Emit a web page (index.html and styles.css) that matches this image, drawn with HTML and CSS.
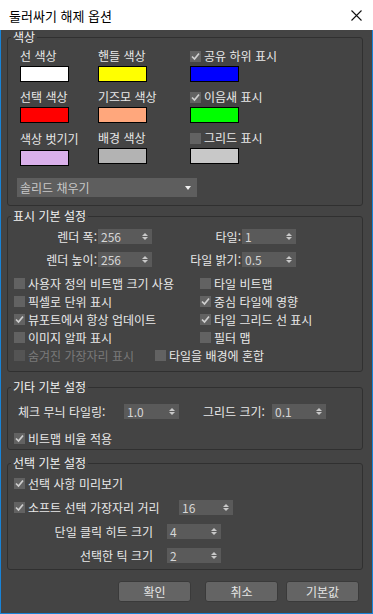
FILE: index.html
```html
<!DOCTYPE html>
<html lang="ko">
  <head>
    <meta charset="UTF-8" />
    <title>둘러싸기 해제 옵션</title>
    <link rel="stylesheet" href="styles.css">
  </head>
  <body>
    <div class="titlebar">
      <span class="title">둘러싸기 해제 옵션</span>
      <svg class="close" width="11" height="11" viewBox="0 0 11 11">
        <path d="M0.5 0.5 L10.5 10.5 M10.5 0.5 L0.5 10.5" stroke="#111" stroke-width="1.1" fill="none" />
      </svg>
    </div>

    <div class="dialog">
      <!-- 색상 -->
      <fieldset class="group group-color">
        <legend>색상</legend>
        <div class="color-grid">
          <div class="color-item">
            <div class="color-label">선 색상</div>
            <div class="swatch sw-white"></div>
          </div>
          <div class="color-item">
            <div class="color-label">핸들 색상</div>
            <div class="swatch sw-yellow"></div>
          </div>
          <div class="color-item">
            <div class="color-label check"><span class="box checked"><svg viewBox="0 0 11 11"><path d="M2 5.5 L4.5 8 L9 2.5" /></svg></span>공유 하위 표시</div>
            <div class="swatch sw-blue"></div>
          </div>

          <div class="color-item">
            <div class="color-label">선택 색상</div>
            <div class="swatch sw-red"></div>
          </div>
          <div class="color-item">
            <div class="color-label">기즈모 색상</div>
            <div class="swatch sw-salmon"></div>
          </div>
          <div class="color-item">
            <div class="color-label check"><span class="box checked"><svg viewBox="0 0 11 11"><path d="M2 5.5 L4.5 8 L9 2.5" /></svg></span>이음새 표시</div>
            <div class="swatch sw-green"></div>
          </div>

          <div class="color-item low">
            <div class="color-label">색상 벗기기</div>
            <div class="swatch sw-lilac"></div>
          </div>
          <div class="color-item">
            <div class="color-label">배경 색상</div>
            <div class="swatch sw-gray"></div>
          </div>
          <div class="color-item">
            <div class="color-label check"><span class="box"></span>그리드 표시</div>
            <div class="swatch sw-light"></div>
          </div>
        </div>
        <div class="dropdown">
          <span>솔리드 채우기</span>
          <span class="caret"></span>
        </div>
      </fieldset>

      <!-- 표시 기본 설정 -->
      <fieldset class="group group-display">
        <legend>표시 기본 설정</legend>
        <div class="spin-row">
          <span class="spin-label">렌더 폭:</span>
          <div class="spinner"><span>256</span><span class="arrows"><i class="up"></i><i class="down"></i></span></div>
          <span class="spin-label">타일:</span>
          <div class="spinner"><span>1</span><span class="arrows"><i class="up"></i><i class="down"></i></span></div>
        </div>
        <div class="spin-row">
          <span class="spin-label">렌더 높이:</span>
          <div class="spinner"><span>256</span><span class="arrows"><i class="up"></i><i class="down"></i></span></div>
          <span class="spin-label">타일 밝기:</span>
          <div class="spinner"><span>0.5</span><span class="arrows"><i class="up"></i><i class="down"></i></span></div>
        </div>

        <div class="check-grid">
          <label class="check"><span class="box"></span>사용자 정의 비트맵 크기 사용</label>
          <label class="check"><span class="box"></span>타일 비트맵</label>
          <label class="check"><span class="box"></span>픽셀로 단위 표시</label>
          <label class="check"><span class="box checked"><svg viewBox="0 0 11 11"><path d="M2 5.5 L4.5 8 L9 2.5" /></svg></span>중심 타일에 영향</label>
          <label class="check"><span class="box checked"><svg viewBox="0 0 11 11"><path d="M2 5.5 L4.5 8 L9 2.5" /></svg></span>뷰포트에서 항상 업데이트</label>
          <label class="check"><span class="box checked"><svg viewBox="0 0 11 11"><path d="M2 5.5 L4.5 8 L9 2.5" /></svg></span>타일 그리드 선 표시</label>
          <label class="check"><span class="box"></span>이미지 알파 표시</label>
          <label class="check"><span class="box"></span>필터 맵</label>
        </div>
        <div class="check-last">
          <label class="check disabled"><span class="box"></span>숨겨진 가장자리 표시</label>
          <label class="check"><span class="box"></span>타일을 배경에 혼합</label>
        </div>
      </fieldset>

      <!-- 기타 기본 설정 -->
      <fieldset class="group group-other">
        <legend>기타 기본 설정</legend>
        <div class="other-row">
          <span class="other-label">체크 무늬 타일링:</span>
          <div class="spinner wide"><span>1.0</span><span class="arrows"><i class="up"></i><i class="down"></i></span></div>
          <span class="grid-label">그리드 크기:</span>
          <div class="spinner"><span>0.1</span><span class="arrows"><i class="up"></i><i class="down"></i></span></div>
        </div>
        <label class="check indent"><span class="box checked"><svg viewBox="0 0 11 11"><path d="M2 5.5 L4.5 8 L9 2.5" /></svg></span>비트맵 비율 적용</label>
      </fieldset>

      <!-- 선택 기본 설정 -->
      <fieldset class="group group-select">
        <legend>선택 기본 설정</legend>
        <label class="check indent first"><span class="box checked"><svg viewBox="0 0 11 11"><path d="M2 5.5 L4.5 8 L9 2.5" /></svg></span>선택 사항 미리보기</label>
        <div class="soft-row">
          <label class="check soft-label"><span class="box checked"><svg viewBox="0 0 11 11"><path d="M2 5.5 L4.5 8 L9 2.5" /></svg></span>소프트 선택 가장자리 거리</label>
          <div class="spinner"><span>16</span><span class="arrows"><i class="up"></i><i class="down"></i></span></div>
        </div>
        <div class="pick-row">
          <span class="pick-label">단일 클릭 히트 크기</span>
          <div class="spinner"><span>4</span><span class="arrows"><i class="up"></i><i class="down"></i></span></div>
        </div>
        <div class="pick-row">
          <span class="pick-label">선택한 틱 크기</span>
          <div class="spinner"><span>2</span><span class="arrows"><i class="up"></i><i class="down"></i></span></div>
        </div>
      </fieldset>

      <div class="buttons">
        <button type="button" class="btn">확인</button>
        <button type="button" class="btn btn-cancel">취소</button>
        <button type="button" class="btn">기본값</button>
      </div>
    </div>
  </body>
</html>
```

FILE: styles.css
```css
/* General Reset */
* {
  margin: 0;
  padding: 0;
  box-sizing: border-box;
}

body {
  width: 373px;
  height: 614px;
  overflow: hidden;
  background-color: #444444;
  font-family: "Noto Sans CJK KR", "Noto Sans", sans-serif;
  font-size: 12px;
  color: #e8e8e8;
}

/* Title bar */
.titlebar {
  height: 30px;
  background: #fff;
  display: flex;
  align-items: center;
  padding-left: 9px;
  color: #000;
  font-size: 13px;
}

.close {
  margin-left: auto;
  margin-right: 11px;
}

.dialog {
  height: 584px;
  border: 1px solid #1883d7;
  border-top: none;
  padding: 0 9px 0 6px;
}

/* Group boxes */
.group {
  border: 1px solid #303030;
  border-radius: 3px;
  padding: 0;
}

.group legend {
  margin-left: 3px;
  padding: 0 2px;
  line-height: 14px;
  color: #f2f2f2;
}

.group-color {
  height: 176px;
}

.group-display {
  height: 163px;
  margin-top: 3px;
}

.group-other {
  height: 70px;
  margin-top: 8px;
}

.group-select {
  height: 114px;
  margin-top: 6px;
}

/* Colours */
.color-grid {
  display: grid;
  grid-template-columns: 78px 92px 1fr;
  row-gap: 7px;
  padding: 4px 0 0 12px;
}

.color-label {
  line-height: 16px;
  height: 16px;
  margin-bottom: 2px;
  white-space: nowrap;
}

.swatch {
  width: 49px;
  height: 16px;
  border: 1px solid #000;
}

.color-item.low .color-label {
  margin-top: 1px;
  margin-bottom: 3px;
}

.sw-white { background: #ffffff; }
.sw-yellow { background: #ffff00; }
.sw-blue { background: #0000ff; }
.sw-red { background: #ff0000; }
.sw-salmon { background: #ffa77c; }
.sw-green { background: #00ff00; }
.sw-lilac { background: #dab0ea; }
.sw-gray { background: #b3b3b3; }
.sw-light { background: #c8c8c8; }

.dropdown {
  margin: 12px 0 0 9px;
  width: 180px;
  height: 19px;
  background: #5e5e5e;
  color: #c8c8c8;
  display: flex;
  align-items: center;
  padding: 0 6px 0 3px;
  justify-content: space-between;
}

.caret {
  width: 0;
  height: 0;
  border-left: 3px solid transparent;
  border-right: 3px solid transparent;
  border-top: 4px solid #f0f0f0;
}

/* Checkboxes */
.check {
  display: flex;
  align-items: center;
  white-space: nowrap;
}

.box {
  width: 11px;
  height: 11px;
  background: #626262;
  margin-right: 3px;
  flex-shrink: 0;
  display: flex;
}

.box svg {
  width: 11px;
  height: 11px;
}

.box svg path {
  fill: none;
  stroke: #cfcfcf;
  stroke-width: 1.7;
}

.check.disabled {
  color: #7a7a7a;
}

.check.disabled .box {
  background: #545454;
}

/* Spinners */
.spinner {
  width: 54px;
  height: 15px;
  background: #5a5a5a;
  color: #d6d6d6;
  display: flex;
  align-items: center;
  padding: 0 4px 0 3px;
  line-height: 15px;
}

.spinner.wide {
  width: 55px;
}

.spinner span:first-child {
  flex: 1;
}

.arrows {
  display: flex;
  flex-direction: column;
  gap: 1px;
}

.arrows i {
  width: 0;
  height: 0;
  border-left: 3px solid transparent;
  border-right: 3px solid transparent;
}

.arrows .up {
  border-bottom: 3px solid #c8c8c8;
}

.arrows .down {
  border-top: 3px solid #c8c8c8;
}

/* Display settings */
.spin-row {
  display: flex;
  align-items: center;
  margin-top: 5px;
}

.spin-row + .spin-row {
  margin-top: 6px;
}

.spin-label {
  width: 90px;
  text-align: right;
  padding-right: 1px;
  white-space: nowrap;
}

.check-grid {
  display: grid;
  grid-template-columns: 186px 1fr;
  grid-auto-rows: 18px;
  margin-top: 6px;
  padding-left: 6px;
}

.check-last {
  display: flex;
  height: 18px;
  padding-left: 6px;
}

.check-last .check:first-child {
  width: 141px;
}

/* Other settings */
.other-row {
  display: flex;
  align-items: center;
  margin-top: 9px;
  padding-left: 10px;
}

.other-label {
  width: 106px;
  white-space: nowrap;
}

.grid-label {
  width: 69px;
  margin-left: 24px;
  white-space: nowrap;
}

.check.indent {
  height: 18px;
  padding-left: 6px;
  margin-top: 9px;
}

/* Selection settings */
.check.indent.first {
  margin-top: 4px;
}

.soft-row {
  display: flex;
  align-items: center;
  height: 18px;
  margin-top: 6px;
  padding-left: 6px;
}

.soft-label {
  width: 165px;
}

.pick-row {
  display: flex;
  align-items: center;
  margin-top: 7px;
}

.pick-label {
  width: 145px;
  margin-right: 14px;
  text-align: right;
  white-space: nowrap;
}

/* Buttons */
.buttons {
  display: flex;
  justify-content: flex-end;
  margin: 11px 4px 0 0;
}

.btn {
  width: 73px;
  height: 21px;
  background: #646464;
  border: 1px solid #3a3a3a;
  border-radius: 3px;
  color: #e4e4e4;
  font-family: inherit;
  font-size: 12px;
  margin-left: 8px;
}

.btn-cancel {
  margin-left: 14px;
}
```
